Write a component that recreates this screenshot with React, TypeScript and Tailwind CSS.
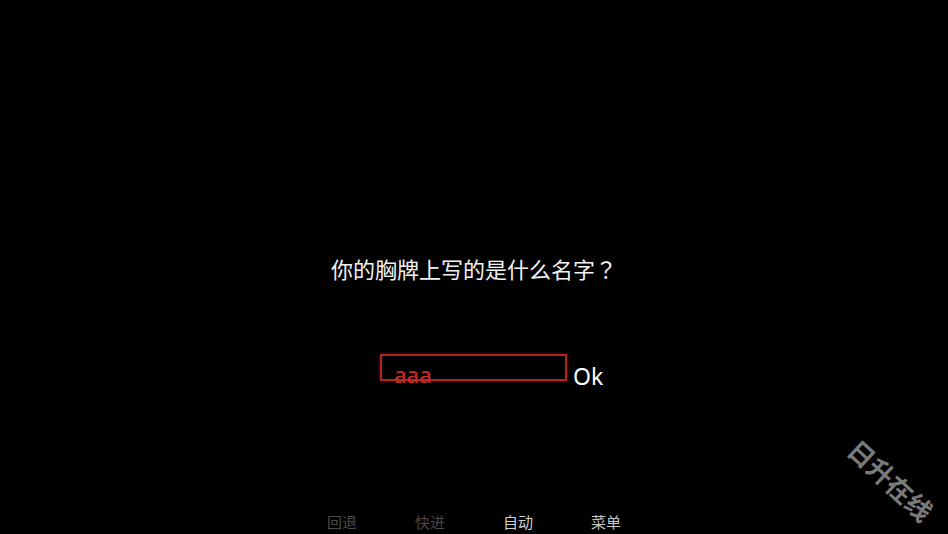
import React from 'react';

const menu = [
  { label: '回退', color: 'text-[#4a4a4a]' },
  { label: '快进', color: 'text-[#4a4a4a]' },
  { label: '自动', color: 'text-[#cfcfcf]' },
  { label: '菜单', color: 'text-[#c4c4c4]' },
];

export default function App() {
  return (
    <div className="relative flex h-[534px] w-full flex-col overflow-hidden bg-black font-['Noto_Sans_CJK_SC','Noto_Sans',sans-serif]">
      {/* question */}
      <div className="pt-[257px] text-center text-[22px] leading-none text-[#f2f2f2]">
        你的胸牌上写的是什么名字<span className="font-['Noto_Sans_CJK_JP',sans-serif]">？</span>
      </div>

      {/* input row */}
      <div className="mt-[75px] flex items-start pl-[380px] font-['Noto_Sans',sans-serif]">
        <div className="h-[27px] w-[187px] border-2 border-[#b0231f] shadow-[0_0_3px_#7a1512]">
          <div className="mt-[7px] pl-[12px] text-[22px] font-medium leading-none text-[#c42a25]">aaa</div>
        </div>
        <div className="ml-[6px] mt-[11px] text-[23px] leading-none text-white">Ok</div>
      </div>

      {/* bottom menu */}
      <div className="mt-auto flex justify-center pb-[5px]">
        {menu.map((m) => (
          <div key={m.label} className={`w-[88px] text-center text-[15px] leading-none ${m.color}`}>
            {m.label}
          </div>
        ))}
      </div>

      {/* watermark */}
      <div className="absolute left-[891px] top-[480px] -translate-x-1/2 -translate-y-1/2 rotate-[43deg] whitespace-nowrap text-[26px] font-bold leading-none text-[#7a7a7a]">
        日升在线
      </div>
    </div>
  );
}
